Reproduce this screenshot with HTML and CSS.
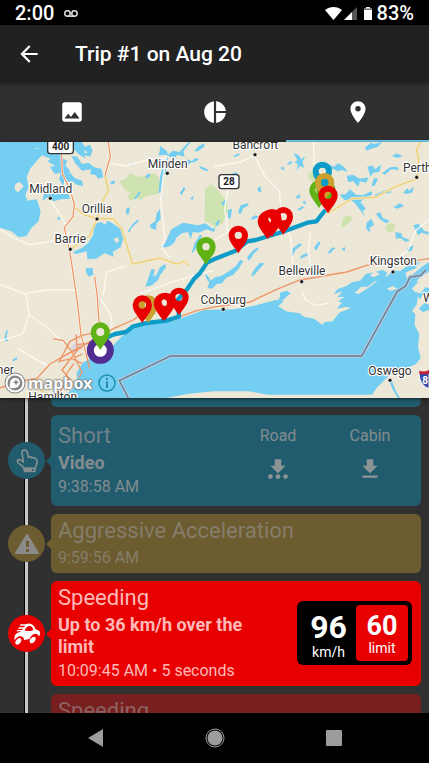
FILE: index.html
```html
<!DOCTYPE html>
<html lang="en">
<head>
	<meta charset="UTF-8">
	<meta name="viewport" content="width=device-width, initial-scale=1">
	<title>Trip #1 on Aug 20</title>
	<link rel="stylesheet" href="styles.css">
</head>
<body>
	<div class="wrap">
		<div class="status">
			<span>2:00</span>
			<svg class="voicemail" width="14" height="8" viewBox="0 0 14 8"><circle cx="3.5" cy="3.5" r="2.7"/><circle cx="10.5" cy="3.5" r="2.7"/><path d="M3.5 6.2h7"/></svg>
			<div class="signals">
				<svg width="17" height="13" viewBox="0 0 17 13"><path fill="#fff" d="M0 3C5-1 12-1 17 3L8.500 13z"/></svg>
				<svg width="13" height="13" viewBox="0 0 13 13"><path fill="#555" d="M13 0v13H0z"/><path fill="#fff" d="M8 5v8H0z"/></svg>
				<svg class="battery" width="8" height="13" viewBox="0 0 8 13"><path fill="#fff" d="M2 0h4v1.500h2V13H0V1.500h2z"/><path fill="#777" d="M0 1.500h8v1.500H0z"/></svg>
				<span>83%</span>
			</div>
		</div>
		<header class="header">
			<button class="back" aria-label="Back">
				<svg width="26" height="26" viewBox="0 0 24 24"><path fill="#fff" d="M20 11H7.830l5.590-5.590L12 4l-8 8 8 8 1.410-1.410L7.830 13H20v-2z"/></svg>
			</button>
			<h1>Trip #1 on Aug 20</h1>
		</header>
		<nav class="tabs">
			<button aria-label="Media">
				<svg width="26" height="26" viewBox="0 0 24 24"><path fill="#fff" d="M21 19V5c0-1.100-.9-2-2-2H5c-1.100 0-2 .9-2 2v14c0 1.100.9 2 2 2h14c1.100 0 2-.9 2-2zM8.500 13.500l2.500 3.010L14.500 12l4.500 6H5l3.500-4.500z"/></svg>
			</button>
			<button aria-label="Statistics">
				<svg width="26" height="26" viewBox="0 0 24 24"><path fill="#fff" d="M11 2v20c-5.070-.5-9-4.790-9-10s3.930-9.500 9-10zm2.030 0v8.990H22c-.47-4.740-4.240-8.520-8.970-8.990zm0 11.010V22c4.740-.47 8.500-4.250 8.970-8.990h-8.970z"/></svg>
			</button>
			<button class="active" aria-label="Map">
				<svg width="26" height="26" viewBox="0 0 24 24"><path fill="#fff" d="M12 2C8.130 2 5 5.130 5 9c0 5.250 7 13 7 13s7-7.750 7-13c0-3.870-3.130-7-7-7zm0 9.500a2.500 2.500 0 0 1 0-5 2.500 2.500 0 0 1 0 5z"/></svg>
			</button>
		</nav>
		<div class="map">
			<svg class="canvas" viewBox="0 0 1287 768" preserveAspectRatio="xMidYMid slice">
				<defs>
					<path id="pin" fill-rule="evenodd" d="M0 0C-9-16-29-33-29-54a29 29 0 0 1 58 0C29-33 9-16 0 0zM0-65a11 11 0 1 0 0 22 11 11 0 0 0 0-22z"/>
				</defs>
				<rect width="1287" height="768" fill="#ece7d6"/>
				<!-- parks -->
				<g fill="#cfe3b0">
					<path d="M358 118l20-8 12-18 20 12 25-2 30-8 12 14 4 30-10 18-30 6-20 12-12-8-18 10-10-16 12-8-18-8z"/>
					<path d="M615 140l18-14 22 20 25 32 3 30-15 36-22 12-16-14-16-4z"/>
					<path d="M926 90l24 4 8 30-16 2-18-20zM1032 224l20-4 4 14-20 18-14 4zM1158 250l12-8 16 4-4 20-16 6-10-10z"/>
				</g>
				<path fill="#d9d3da" d="M214 612l14-12 12 10-2 18-16 4-10-8z"/>
				<!-- lakes -->
				<g fill="#73cef1">
					<path d="M0 0h98l10 22 14-4 8 18-14 14-26 30-10 26 6 30-10 22 6 18 28-4 12 34-6 32-22 20-14 24-24 4-22-18-44-14z"/>
					<path d="M98 0h44v12l18 16 20 2 4 18 18 8-6 14 16 20-12 8 8 20-14-10-4 26-12-22 4-20-18 4-14-22 16-2-24-14 10-8-26-10-10-22-20 4z"/>
					<path d="M140 134l18 14 14-4 4 10 24 2 2-14 8 28-26 2-24 6-18-12-14 10 4-22zM204 0h42l8 14 16-6 8 20-8 16-18-4 6 10-20-12-14-14-20-4zM214 42l18 2 14 22 20-4 16 14 22 4 6 26-16 4-6-10-18-4 4-14-28 4-20-22zM194 100l18-6 12 14 22 8 4 16-20-4-12-10-14 2z"/>
					<path d="M282 246l22-6 10 8 10-12 20 12 18 14 8 28-8 26-24 14 4 14-28-10-26 16-26 2-2-24-32 8-10-6 28-12 18-14 16-26z"/>
					<path d="M480 12l20 14 4 12 14-12 20 4 28-30h6l-22 28 4 16-22-6-8 12-26-12-22 2 4-18zM496 46l8-2-4 38-12 28-6 44-6-2 4-46z"/>
					<path d="M450 248l16-10 4-24 10-14 2 32-12 12-2 20-16-6zM378 200l12-4-4 22-8-2zM384 268l12-20 18-16 2 6-20 18-8 16zM402 170l16-22 4 4-14 20zM436 102l12-8 4 6-10 10zM390 72l8-8 2 6zM330 122l12-8 4 8-10 6z"/>
					<path d="M482 316l14-14 18-40 22-12 14-8 20 4 24 4 22-6 22 16 8-4-4 14-22-8-24 10-18-2-6 22-8-22-18 4-16 12-6 14-10 10-14 6zM584 304l16-26 6 2-10 26-14 22-8 8zM540 152l12-18 4 6-12 20zM570 170l12-10-4 14zM550 66l12-14 14 6 8-10 14 4-14 8-12 2-14 12zM582 28l14-16 18-8-2 10-18 14zM598 72l12 4 16 8-4 4-20-8z"/>
					<path d="M880 32l16 8 8 12 12-10-8 18 4 18-12-6-10 14 4-20-10-4 8-8zM988 68l14 6 12-10 18 10 10 16-16-6-14 4-12-8-18 6zM1040 102l18-4 22 12 26-4-8 16-18-4-6 16-14-16-16 2zM1102 74l16-4 6 12 20-14-6 22-18 2-8 12zM1122 108l12 2-8 18-12 6zM1146 94l24-18 20-2 8 10-24-2-20 16zM1094 18l18-16 10 4 24-6-12 14-20 6-14 6zM1176 42l14-8 18 8-16 6z"/>
					<path d="M1018 158l20-2 12-14 18 16 20 2 26-12 4 8-30 18-16 16-16-14-22-2zM1064 182l14-6 20 24-10 6 8 18-16-20zM1124 158l34-14 20 6-34 8-14 10zM1128 216l12-6 8 18 22 8-12 8-18-12zM1100 242l14-12 8 18-14 10 4 14-14-12zM1180 196l20-12 12 8-20 8zM1210 152l12-14 4 8 16-12-6 18-16 4zM1240 250l16-4 16 20 14 4v8l-22-6-10 8zM1186 270l18 4 4 12 22 8-12 6-18-12-12 2zM1222 318l18-8-4 16-16 4z"/>
					<path d="M692 96l18-6 2 8-16 8zM722 190l22-6 2 6-16 8-8 18-8-4zM684 204l12-4-4 30-8-4zM772 140l10-8 2 20-10-4zM862 64l12-8 2 8-12 4zM840 78l10-4 4 12zM888 164l10-8 4 10-12 4zM906 180l12-4-2 12zM806 0l10-6 4 8-10 8zM700 42l16-8 4 4-16 8zM664 184l14-12 2 8-12 12zM752 228l14-8 10 4-18 10zM892 202l16-10 4 4-14 10z"/>
					<path d="M742 344l16-18 16-10 2 6-16 14-6 12-10 8zM764 380l16-18 14 2-16 18-16 18-10 2zM876 322l22-18 8 4-20 16-8 18-6-2zM902 342l20-10 2 8-22 10zM942 318l14-20 6 4-14 24zM984 330l14-14 8 2-18 18zM1024 322l10-8 2 14zM646 244l10-10 4 4-10 16z"/>
					<path d="M622 438l8-22 16-10 18-4 28-18 16-12 12-18 10 2-14 24-16 18-22 10-12 16-16 2-14 14zM616 396l8 6 10 18-4 4-12-16zM258 378h20l2 20-14 6-8-14zM436 434l10-28 8-24h10l-4 22 10-6 6-14 12-2-14 32-18 16zM474 390l6-14 16-10 2 8-12 18-10 12zM12 594l6-28 6-2-4 18 4 16-8-2zM36 654l14-8 2 6-12 6zM172 228l6-4 4 8-8 2z"/>
					<!-- Lake Ontario -->
					<path d="M180 768l38-26 14-24-2-26 18-30 42-24 40-18 34-36 32-22 52-18 64-4 44-16 56-20 90-2 58-10 68-18 24 4-18 14 24 16 40 6 14 10 30 6 24 18 10-8 22-2 20-26 34-14-12-4-30 6 16-18-12-4 20-14-22 2 16-18-26 8 10-14 28-10 16-12 24-4 18-20 26-6 24-6 14 8-10 20-28 6-20 16-20 0-20 18 12 4 32-20 22-18 36-18 10-16 24 4 16-12 24-12 20-4-12 18-32 14 6 22 22-8 10 14-18 20 18 20-4 28-14 18 10 10-2 34 14 26-4 40 8 32-14 18-38 18-42 16-38 38-14 20H804l-58-10-106 0-80 8-60 12z"/>
					<path d="M1226 408l18-16 20-16 23-16v30l-20 8-18 20zM1242 450l20 4 14-18 11 2v18l-18-2-8 18zM1256 500l18-18 13 6v16l-18 6zM840 452l20-6 12 8-26 22-14 4 8-16zM1176 718l12 30 12 20h-6l-14-22-10-22z"/>
				</g>
				<!-- islands -->
				<g fill="#ece7d6">
					<path d="M46 126l14-6 4 6 8 6-14 14-4 6-10-10zM160 26l14 4-8 8zM252 24l10 6-6 6zM340 290l14-4 4 10-8 8zM1110 400l14-12 16 8-18 10zM1160 440l18-8 14 8-20 6z"/>
				</g>
				<!-- minor roads -->
				<g fill="none" stroke="#fbf9f2" stroke-width="4">
					<path d="M0 262l40 26 50 20 80-12 40-26M152 176l30 46 16 28M330 64l50 8 60-18 60-6M500 42l-8 46-10 80 12 120-8 30 24 30M0 426l78 32 10 60 50 36 60 54M76 454l60-10 96 0M88 516l-20 60-68 20M302 470l30 50 8 70M764 42l30 60 44 44 10 100 24 40 6 80M642 74l80-14 42-20M684 140l-10 60 10 70-40 24M940 0l4 80 20 40M932 270l-8 60 10 54M1287 232l-40 34-24 60-60 40M906 446l10 26 30 18 40-6M380 370l-60 20-10 70M54 620l40 24 54 30M420 455l100-36 120-34"/>
				</g>
				<!-- highways -->
				<g fill="none" stroke="#f6e7bc" stroke-width="8">
					<path d="M315 100l10 46-20 38-14 46-22 52-54 38M222 194l30 24 38 12 50 0 24 28 34 108 80-18 52 18 24-8 12 14M984 214l72-44 70-4 60-32 66-24 4-56-6-30 10-24"/>
				</g>
				<g fill="none" stroke="#e8c96a" stroke-width="3">
					<path d="M315 100l10 46-20 38-14 46-22 52-54 38M222 194l30 24 38 12 50 0 24 28 34 108 80-18 52 18 24-8 12 14M984 214l72-44 70-4 60-32 66-24 4-56-6-30 10-24M102 712l20 34 40 14"/>
				</g>
				<g fill="none" stroke="#fff" stroke-width="7">
					<path d="M183 0l4 94 24 50 12 44-4 36-26 32 14 60 10 62 16 110 10 90 16 60M325 0l6 44-16 56M284 404l8 60 8 126"/>
				</g>
				<g fill="none" stroke="#ef9465" stroke-width="4">
					<path d="M183 0l4 94 24 50 12 44-4 36-26 32 14 60 10 62 16 110 10 90 16 60 10 42"/>
					<path d="M325 0l6 44-16 56M284 404l8 60 8 126M0 738l60-20 50-8 40-44 50-28 60-34 80-44 60-26 50-40"/>
					<path d="M160 590l30 6 26 34 30 60-10 18M228 578l4 46-46 60 24 28-26 26-8 30M176 662l34-64 36-18 60-12M200 636l46-20M176 658l40-8 30 14M224 646l24-10M232 608l34-4 40-20M196 700l26-36"/>
					<path d="M540 524l50-18 60-12 100-14 80-38 70-28 140-24 60-20 100-8 87-12"/>
				</g>
				<!-- border -->
				<path fill="none" stroke="#a9cbe0" stroke-width="12" d="M385 768l-27-52 154-74h573l107-194 25-16 13-27 32-5 15-16"/>
				<path fill="none" stroke="#6c7a94" stroke-width="4" d="M385 768l-27-52 154-74h573l107-194 25-16 13-27 32-5 15-16"/>
				<!-- trip -->
				<path fill="none" stroke="#0d9bc7" stroke-width="13" stroke-linejoin="round" d="M301 612l24-28 20-8 33-6 22-17 40-10 60-7 37-12-4-50 28-32 20-30 20-20 20-30 21-10 65-26 35-28 25-4 80-24 75-28 27-4 27-34"/>
				<!-- places -->
				<g class="places">
					<text x="503" y="77">Minden</text>
					<text x="152" y="152">Midland</text>
					<text x="291" y="212">Orillia</text>
					<text x="211" y="302">Barrie</text>
					<text x="766" y="22">Bancroft</text>
					<text x="1252" y="90">Perth</text>
					<text x="1180" y="370">Kingston</text>
					<text x="906" y="400">Belleville</text>
					<text x="670" y="486">Cobourg</text>
					<text x="1170" y="700">Oswego</text>
					<text x="1285" y="480">W</text>
					<text x="16" y="697">ner</text>
					<text x="158" y="778">Hamilton</text>
				</g>
				<g fill="#111" stroke="#fff" stroke-width="2">
					<circle cx="502" cy="94" r="6"/><circle cx="151" cy="169" r="6"/><circle cx="291" cy="231" r="6"/><circle cx="211" cy="322" r="6"/><circle cx="765" cy="38" r="6"/><circle cx="1250" cy="106" r="6"/><circle cx="1179" cy="390" r="6"/><circle cx="905" cy="419" r="6"/><circle cx="670" cy="502" r="6"/><circle cx="1170" cy="715" r="6"/>
				</g>
				<g fill="#fff" stroke="#333" stroke-width="4">
					<rect x="143" y="-10" width="77" height="45" rx="8"/>
					<rect x="657" y="98" width="60" height="42" rx="8"/>
				</g>
				<g class="shields">
					<text x="182" y="25">400</text>
					<text x="687" y="130">28</text>
				</g>
				<path fill="#3747a8" stroke="#fff" stroke-width="3" d="M1258 688c14 4 24 0 29-4v56c-20-6-32-28-29-52z"/>
				<path fill="#c8202f" d="M1258 696v-10c14 4 22 2 29-3v13z"/>
				<text class="route-no" x="1275" y="726">8</text>
				<!-- events -->
				<circle cx="301" cy="625" r="30" fill="#fff" stroke="#512d91" stroke-width="21"/>
				<g fill="#5fb315">
					<use href="#pin" x="301" y="624"/>
					<use href="#pin" x="618" y="368"/>
				</g>
				<circle cx="301" cy="570" r="12" fill="#ece7d6"/>
				<use href="#pin" x="967" y="142" fill="#0d9bc7"/>
				<use href="#pin" x="957" y="198" fill="#5fb315"/>
				<use href="#pin" x="978" y="198" fill="#5fb315"/>
				<use href="#pin" x="974" y="176" fill="#cca030"/>
				<circle cx="974" cy="122" r="11" fill="#0d9bc7"/>
				<use href="#pin" x="445" y="543" fill="#cca030"/>
				<g fill="#e80000">
					<use href="#pin" x="984" y="214"/>
					<use href="#pin" x="802" y="291"/>
					<use href="#pin" x="808" y="287"/>
					<use href="#pin" x="816" y="284"/>
					<use href="#pin" x="850" y="278"/>
					<use href="#pin" x="715" y="334"/>
					<use href="#pin" x="427" y="543"/>
					<use href="#pin" x="490" y="537"/>
					<use href="#pin" x="496" y="535"/>
					<use href="#pin" x="537" y="520"/>
				</g>
			</svg>
			<div class="attribution">
				<svg width="22" height="22" viewBox="0 0 22 22"><circle cx="11" cy="11" r="10.500" fill="#888"/><circle cx="11" cy="11" r="9.500" fill="#fff"/><circle cx="11" cy="11" r="7.500" fill="#888"/><path fill="#fff" d="M6 16c-1-6 1-10 5-10 3 0 5 2 5 4.500 0 4-4 6.500-10 5.500z"/><path fill="#888" d="M12 7l1 2.200 2.200 1-2.200 1-1 2.200-1-2.200-2.200-1 2.200-1z"/></svg>
				<span class="mapbox">mapbox</span>
				<button aria-label="Attribution">
					<svg width="18" height="18" viewBox="0 0 18 18"><circle cx="9" cy="9" r="8" fill="none" stroke="#1b8fb0" stroke-width="1.500"/><path fill="#1b8fb0" d="M8 4h2v2H8zM8 7.500h2V14H8z"/></svg>
				</button>
			</div>
		</div>
		<ul class="timeline">
			<li class="blue cut"><div class="card"></div></li>
			<li class="blue video">
				<span class="dot">
					<svg width="22" height="24" viewBox="48 162 66 72"><path fill="none" stroke="#858e91" stroke-width="5" stroke-linejoin="round" d="M72 220C67 209 53 207 52 199c0-7 11-7 18 2l-4-29c0-9 14-9 16 0l3 15c5-2 9-1 11 2 5-3 9-1 10 3 6 1 6 5 5 12-1 6-4 8-5 16z"/><path fill="#858e91" d="M69 218h38v14H72z"/><circle cx="98" cy="225" r="3" fill="#215c6e"/></svg>
				</span>
				<div class="card">
					<div class="info">
						<h2>Short</h2>
						<h3>Video</h3>
						<p>9:38:58 AM</p>
					</div>
					<div class="media">
						<button>Road
							<svg width="26" height="26" viewBox="0 0 24 24"><path d="M19 9h-4V3H9v6H5l7 7 7-7z"/><circle cx="5" cy="19" r="2.200"/><circle cx="12" cy="19" r="2.200"/><circle cx="19" cy="19" r="2.200"/></svg>
						</button>
						<button>Cabin
							<svg width="26" height="26" viewBox="0 0 24 24"><path d="M19 9h-4V3H9v6H5l7 7 7-7zM5 18v2h14v-2H5z"/></svg>
						</button>
					</div>
				</div>
			</li>
			<li class="gold">
				<span class="dot">
					<svg width="26" height="24" viewBox="0 0 26 24"><path fill="#8a8a88" stroke="#8a8a88" stroke-width="2" stroke-linejoin="round" d="M13 3l11 18H2z"/><path fill="#6c5c30" d="M12 9h3v6h-3zM12 17h3v3h-3z"/></svg>
				</span>
				<div class="card">
					<div class="info">
						<h2>Aggressive Acceleration</h2>
						<p>9:59:56 AM</p>
					</div>
				</div>
			</li>
			<li class="red">
				<span class="dot">
					<svg width="28" height="24" viewBox="38 155 84 70">
						<path fill="#fff" d="M42 202c0-8 6-15 14-17l8-3H48l3-4h14l3-4H53l3-4h15l3-5H58l3-4h15c14-6 25 1 29 14l11 5c5 4 4 14-1 17-1-9-11-10-18-5-5 4-8 8-9 13l-17 3c0-11-14-15-23-6-3 3-4 5-5 8z"/>
						<path fill="#e80000" d="M73 180c2-7 6-12 12-14 7-1 12 3 14 11-4 3-8 4-13 4z"/>
						<ellipse cx="54" cy="212" rx="7" ry="11" transform="rotate(38 54 212)" fill="#fff"/>
						<ellipse cx="97" cy="208" rx="7" ry="11" transform="rotate(38 97 208)" fill="#fff"/>
					</svg>
				</span>
				<div class="card">
					<div class="info">
						<h2>Speeding</h2>
						<h3>Up to 36 km/h over the limit</h3>
						<p>10:09:45 AM • 5 seconds</p>
					</div>
					<div class="speed">
						<div class="actual"><b>96</b>km/h</div>
						<div class="limit"><b>60</b>limit</div>
					</div>
				</div>
			</li>
			<li class="faded">
				<div class="card">
					<div class="info">
						<h2>Speeding</h2>
					</div>
				</div>
			</li>
		</ul>
		<div class="system">
			<button aria-label="Back"><svg width="20" height="20" viewBox="0 0 20 20"><path fill="#9c9c9c" d="M17 1v18L2 10z"/></svg></button>
			<button aria-label="Home"><svg width="20" height="20" viewBox="0 0 20 20"><circle cx="10" cy="10" r="9" fill="none" stroke="#9c9c9c"/><circle cx="10" cy="10" r="7.500" fill="#9c9c9c"/></svg></button>
			<button aria-label="Recent apps"><svg width="20" height="20" viewBox="0 0 20 20"><rect x="2" y="2" width="16" height="16" rx="1" fill="#9c9c9c"/></svg></button>
		</div>
	</div>
</body>
</html>
```

FILE: styles.css
```css
body,ul,h1,h2,h3,p{
	margin: 0;
	padding: 0;
}
body{
	background: #303030;
	font-family: Roboto, "Liberation Sans", sans-serif;
}
button{
	border: none;
	background: none;
	padding: 0;
	color: inherit;
	font: inherit;
}
svg{
	display: block;
}
.wrap{
	display: flex;
	flex-direction: column;
	height: 100vh;
	overflow: hidden;
}
.status{
	display: flex;
	align-items: center;
	height: 25px;
	padding: 2px 15px 0;
	box-sizing: border-box;
	background: #000;
	color: #fff;
	font-size: 20px;
	font-weight: 500;
	line-height: 23px;
}
.voicemail{
	margin-left: 10px;
	fill: none;
	stroke: #ddd;
	stroke-width: 1.5;
}
.signals{
	display: flex;
	align-items: center;
	margin-left: auto;
	gap: 2px;
}
.signals .battery{
	margin: 0 3px 0 5px;
}
.header{
	display: flex;
	align-items: center;
	height: 58px;
	padding: 0 16px;
	background: #212121;
	color: #fff;
	box-shadow: 0 1px 4px rgba(0,0,0,.3);
}
.header h1{
	margin-left: 33px;
	font-size: 21px;
	font-weight: 500;
}
.tabs{
	display: flex;
	height: 59px;
}
.tabs button{
	flex: 1;
	display: flex;
	align-items: center;
	justify-content: center;
	border-bottom: 2px solid transparent;
}
.tabs .active{
	border-color: #73cef1;
}
/* map */
.map{
	position: relative;
	z-index: 1;
	flex: none;
	box-shadow: 0 1px 4px rgba(0,0,0,.6);
}
.canvas{
	width: 100%;
	height: 256px;
}
.places text{
	font-size: 36px;
	text-anchor: middle;
	fill: #333;
	stroke: #fff;
	stroke-width: 7px;
	stroke-linejoin: round;
	paint-order: stroke;
}
.shields text,.route-no{
	font-size: 30px;
	font-weight: 700;
	text-anchor: middle;
	fill: #222;
}
.map .route-no{
	fill: #fff;
}
.attribution{
	position: absolute;
	left: 4px;
	bottom: 4px;
	display: flex;
	align-items: center;
}
.mapbox{
	margin: 0 6px 0 2px;
	color: #fff;
	font: 700 16px/22px "Noto Sans", sans-serif;
	text-shadow: 0 0 2px #666, 0 0 2px #666, 0 0 1px #666;
}
/* timeline */
.timeline{
	flex: 1;
	min-height: 0;
	overflow: hidden;
	list-style: none;
	background: linear-gradient(90deg, #000 1px, #c8c8c8 1px) 24px 0 / 4px 100% no-repeat;
}
.timeline li{
	display: flex;
	align-items: center;
	padding: 0 8px 8px 51px;
	position: relative;
}
.card{
	flex: 1;
	display: flex;
	align-items: center;
	position: relative;
	padding: 3px 5px 4px 7px;
	border-radius: 6px;
	background: var(--tone);
}
.dot{
	display: flex;
	align-items: center;
	justify-content: center;
	width: 37px;
	height: 37px;
	margin: 0 6px 0 -43px;
	border-radius: 50%;
	background: var(--tone);
}
.dot + .card:before{
	content: "";
	position: absolute;
	right: 100%;
	top: 50%;
	margin-top: -5px;
	border: 5px solid transparent;
	border-left: none;
	border-right-color: var(--tone);
}
.blue{
	--tone: #215c6e;
	color: #838c90;
}
.gold{
	--tone: #6c5c30;
	color: #857d69;
}
.red{
	--tone: #e80000;
	color: #ffb9b9;
}
.faded{
	--tone: #781f1f;
	color: #8f6262;
}
.cut .card{
	height: 9px;
	padding: 0;
	border-radius: 0 0 6px 6px;
}
.video .card{
	min-height: 84px;
}
.info{
	flex: 1;
}
.red .info{
	padding-right: 24px;
}
.info h2{
	font-size: 22px;
	font-weight: 400;
	line-height: 28px;
}
.blue h2{
	color: #718188;
}
.info h3{
	margin-top: 2px;
	font-size: 18px;
	font-weight: 700;
	line-height: 22px;
}
.info p{
	margin-top: 2px;
	font-size: 16px;
	line-height: 22px;
}
.media{
	display: flex;
	align-self: flex-start;
}
.media button{
	display: flex;
	flex-direction: column;
	align-items: center;
	gap: 10px;
	width: 92px;
	padding-top: 8px;
	font-size: 16px;
	line-height: 20px;
}
.media svg{
	fill: #8d9496;
}
.speed{
	display: flex;
	margin-right: 4px;
	padding: 4px;
	border-radius: 6px;
	background: #000;
	color: #fff;
	font-size: 14px;
	line-height: 17px;
	text-align: center;
}
.speed b{
	display: block;
}
.actual{
	width: 55px;
	padding-top: 5px;
}
.actual b{
	font-size: 32px;
	line-height: 34px;
}
.limit{
	width: 52px;
	padding: 7px 0 4px;
	border-radius: 4px;
	background: #e80000;
}
.limit b{
	font-size: 27px;
	line-height: 28px;
}
/* system bar */
.system{
	display: flex;
	height: 50px;
	padding: 0 36px;
	background: #000;
}
.system button{
	flex: 1;
	display: flex;
	align-items: center;
	justify-content: center;
}
```
